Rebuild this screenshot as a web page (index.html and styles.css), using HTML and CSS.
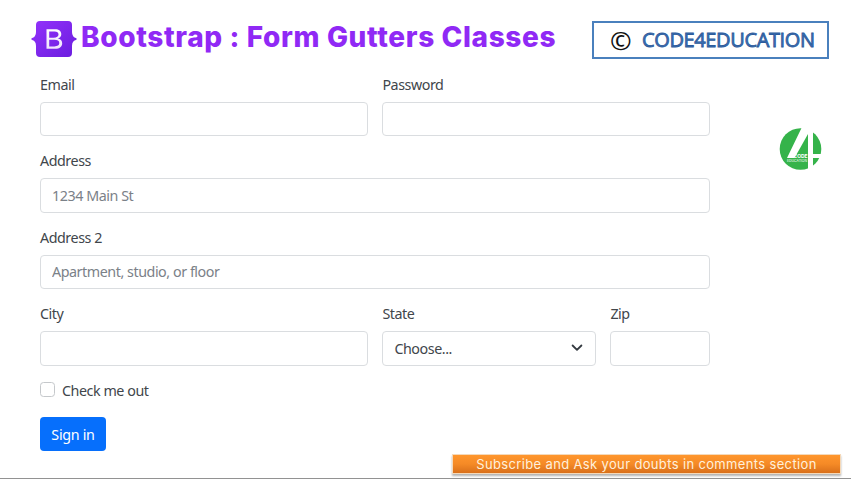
FILE: index.html
```html
<!DOCTYPE html>
<html lang="en">
<head>
<meta charset="utf-8">
<title>Bootstrap : Form Gutters Classes</title>
<link rel="stylesheet" href="styles.css">
</head>
<body>
<header class="header">
  <svg class="logo" viewBox="0 0 46 36" width="46" height="36" aria-hidden="true">
    <defs>
      <linearGradient id="g" x1="0" y1="0" x2="1" y2="1"><stop offset="0" stop-color="#9332fb"/><stop offset="1" stop-color="#6a1dde"/></linearGradient>
      <linearGradient id="w" x1="0" y1="0" x2="0" y2="1"><stop offset="0" stop-color="#fff"/><stop offset="1" stop-color="#efe3fc"/></linearGradient>
    </defs>
    <path fill="url(#g)" d="M9 0H37Q41 0 41 4V11Q41 16.5 45.5 17.2V18.8Q41 19.5 41 25V32Q41 36 37 36H9Q5 36 5 32V25Q5 19.5.5 18.8V17.2Q5 16.5 5 11V4Q5 0 9 0Z"/>
    <path fill="url(#w)" fill-rule="evenodd" d="M15.5 8.3H24.1C28 8.3 30.3 10.3 30.3 13.2C30.3 15.3 28.8 17 26.8 17.4C29.5 17.7 31.2 19.6 31.2 22.2C31.2 25.7 28.6 27.7 24.3 27.7H15.5ZM18.2 10.5V16.7H22.7C25.9 16.7 27.5 15.7 27.5 13.6C27.5 11.6 26.1 10.5 23.6 10.5ZM18.2 18.8V25.4H23.4C26.6 25.4 28.3 24.3 28.3 22.1C28.3 19.9 26.6 18.8 23.2 18.8Z"/>
  </svg>
  <h1 class="title">Bootstrap : Form Gutters Classes</h1>
  <div class="brand"><span class="copy">©</span><span class="brand-name">CODE4EDUCATION</span></div>
</header>
<main class="main">
  <form class="form">
    <div class="field half"><label for="email">Email</label><input id="email" type="text"></div>
    <div class="field half"><label for="password">Password</label><input id="password" type="password"></div>
    <div class="field full"><label for="address">Address</label><input id="address" type="text" placeholder="1234 Main St"></div>
    <div class="field full"><label for="address2">Address 2</label><input id="address2" type="text" placeholder="Apartment, studio, or floor"></div>
    <div class="field half"><label for="city">City</label><input id="city" type="text"></div>
    <div class="field state"><label for="state">State</label>
      <div class="select" id="state"><span>Choose...</span>
        <svg viewBox="0 0 12 8" width="12" height="8" aria-hidden="true"><path d="M1.6 1.5L6 5.9L10.4 1.5" fill="none" stroke="#343a40" stroke-width="1.8" stroke-linecap="round" stroke-linejoin="round"/></svg>
      </div>
    </div>
    <div class="field zip"><label for="zip">Zip</label><input id="zip" type="text"></div>
    <label class="check full"><input type="checkbox"><span>Check me out</span></label>
    <button class="submit" type="button">Sign in</button>
  </form>
  <svg class="badge" viewBox="0 0 44 44" width="44" height="44">
    <circle cx="21.5" cy="22" r="20.8" fill="#35b34a"/>
    <path fill="#fff" d="M23 0H34V27H43.5V31H34V44H29V7L15.5 31H8Z"/>
    <text x="14.5" y="31" class="badge-code" textLength="14" lengthAdjust="spacingAndGlyphs">CODE</text>
    <text x="8" y="35" class="badge-edu" textLength="20" lengthAdjust="spacingAndGlyphs">EDUCATION</text>
  </svg>
</main>
<footer class="footer"><div class="banner">Subscribe and Ask your doubts in comments section</div></footer>
</body>
</html>
```

FILE: styles.css
```css
* { box-sizing: border-box; }
body {
  margin: 0;
  width: 851px;
  height: 479px;
  overflow: hidden;
  display: flex;
  flex-direction: column;
  background: #fff;
  border-bottom: 1px solid #929292;
  color: #41464b;
  font: 14.3px/21.5px "Noto Sans", "Open Sans", sans-serif;
  letter-spacing: -0.45px;
}
.header {
  display: flex;
  align-items: flex-start;
  height: 74px;
  padding: 21px 22px 0 31px;
}
.logo { flex: none; }
.title {
  margin: 0 0 0 4px;
  width: 511px;
  font: 800 28px/32px Inter, sans-serif;
  letter-spacing: 0.63px;
  color: #9029f5;
  white-space: nowrap;
}
.brand {
  display: flex;
  align-items: center;
  width: 237px;
  height: 38px;
  padding-left: 16px;
  border: 2px solid #4a80bd;
}
.copy {
  width: 32px;
  font: 26px/34px "Noto Sans", sans-serif;
  color: #111;
}
.brand-name {
  font: 400 20px/34px "Open Sans", sans-serif;
  letter-spacing: -0.37px;
  color: #3c70b4;
  -webkit-text-stroke: 0.8px #2c5b9b;
  white-space: nowrap;
}
.main {
  display: flex;
  flex: 1;
  padding-left: 40px;
}
.form {
  display: grid;
  grid-template-columns: 328.4px 214px 99.6px;
  grid-auto-rows: max-content;
  column-gap: 14px;
  row-gap: 14px;
  width: 670px;
}
.field { display: flex; flex-direction: column; gap: 6.5px; }
.half:nth-child(2) { grid-column: 2 / -1; }
.full { grid-column: 1 / -1; }
.field input, .select {
  width: 100%;
  height: 34.5px;
  margin: 0;
  padding: 0 11px;
  border: 1px solid #dadde0;
  border-radius: 4px;
  background: #fff;
  font: inherit;
  letter-spacing: inherit;
  color: inherit;
}
.field input::placeholder { color: #7b8188; opacity: 1; }
.select {
  display: flex;
  align-items: center;
  justify-content: space-between;
  padding-right: 12px;
}
.select svg { margin-top: -1px; }
.check { display: flex; align-items: center; gap: 7px; }
.check input {
  appearance: none;
  width: 15px;
  height: 15px;
  margin: -1px 0 0;
  border: 1px solid #c5c8cb;
  border-radius: 3.5px;
}
.submit {
  width: 66px;
  height: 34px;
  margin-top: 2px;
  padding: 1px 0 0;
  border: 0;
  border-radius: 4px;
  background: #066ffc;
  color: #fff;
  font: inherit;
  letter-spacing: -0.3px;
}
.main .form { margin-top: -0.4px; }
.badge { margin: 53px 0 0 68.5px; flex: none; }
.badge-code { font: 700 5.2px Inter, sans-serif; fill: #fff; letter-spacing: 0; }
.badge-edu { font: 400 3.8px Inter, sans-serif; fill: #fff; letter-spacing: 0; }
.footer {
  display: flex;
  justify-content: flex-end;
  height: 25px;
  padding-right: 10px;
}
.banner {
  width: 389px;
  height: 20px;
  margin-top: 1px;
  background: linear-gradient(#ff962d, #f58a26 50%, #d9701b);
  border: 1px solid #f4d9ba;
  box-shadow: 0 2px 2px rgba(0, 0, 0, .3);
  color: #fff0dc;
  font: 400 13px/18px Inter, sans-serif;
  letter-spacing: 0.35px;
  text-align: center;
  white-space: nowrap;
}
```
